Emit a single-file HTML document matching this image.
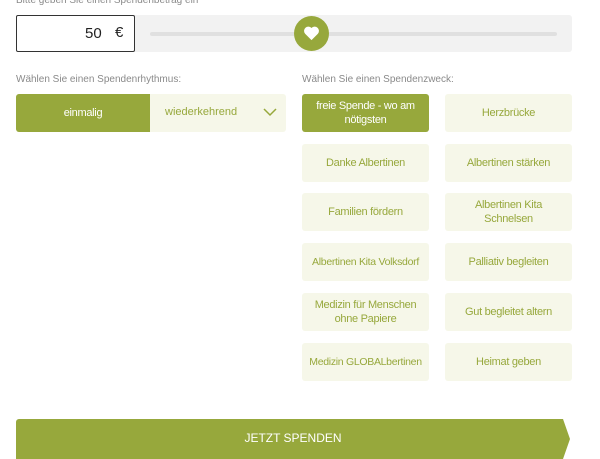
<!DOCTYPE html><html><head><style>
*{margin:0;padding:0;box-sizing:border-box}
body{width:600px;height:450px;overflow:hidden;background:#fff;font-family:"Liberation Sans",sans-serif;position:relative}
.a{position:absolute}
.lbl{font-size:10px;color:#8a8a8a}
.b{position:absolute;width:127px;height:38px;background:#f6f7e9;color:#97a83c;font-size:11px;letter-spacing:-0.3px;display:flex;align-items:center;justify-content:center;text-align:center;border-radius:3px;line-height:14px;padding:0 2px}
.n{white-space:nowrap}
.g{background:#97a83c;color:#fff}
</style></head><body>
<div class="a lbl" style="left:16px;top:-5px">Bitte geben Sie einen Spendenbetrag ein</div>
<div class="a" style="left:134px;top:15px;width:438px;height:37px;background:#f2f2f2;border-radius:0 3px 3px 0"></div>
<div class="a" style="left:150px;top:32px;width:407px;height:4px;background:#e0e0e0;border-radius:2px"></div>
<div class="a" style="left:16px;top:15px;width:119px;height:37px;border:1px solid #333;background:#fff;border-radius:2px;font-size:15px;color:#222"><span class="a" style="left:68px;top:9px">50</span><span class="a" style="left:98px;top:8px">€</span></div>
<div class="a" style="left:294px;top:16px;width:35px;height:35px;border-radius:50%;background:#97a83c"></div>
<svg class="a" style="left:303px;top:25px" width="17" height="16" viewBox="0 0 24 22"><path d="M12 21 L3 12 A5.5 5.5 0 0 1 12 4 A5.5 5.5 0 0 1 21 12 Z" fill="#fff"/></svg>
<div class="a lbl" style="left:16px;top:74px">Wählen Sie einen Spendenrhythmus:</div>
<div class="a lbl" style="left:302px;top:74px">Wählen Sie einen Spendenzweck:</div>
<div class="a" style="left:16px;top:94px;width:270px;height:38px;background:#f6f7e9;border-radius:3px"></div>
<div class="b g" style="left:16px;top:94px;width:134px;border-radius:3px 0 0 3px">einmalig</div>
<div class="a" style="left:165px;top:106px;font-size:11px;color:#97a83c">wiederkehrend</div>
<svg class="a" style="left:263px;top:107px" width="14" height="10" viewBox="0 0 14 10"><path d="M1 2 L7 8 L13 2" stroke="#97a83c" stroke-width="1.5" fill="none"/></svg>
<div class="b g" style="left:302px;top:94px">freie Spende - wo am nötigsten</div>
<div class="b" style="left:445px;top:94px">Herzbrücke</div>
<div class="b" style="left:302px;top:144px">Danke Albertinen</div>
<div class="b" style="left:445px;top:144px">Albertinen stärken</div>
<div class="b" style="left:302px;top:193px">Familien fördern</div>
<div class="b" style="left:445px;top:193px;padding:0 20px">Albertinen Kita Schnelsen</div>
<div class="b n" style="left:302px;top:243px;font-size:10.5px">Albertinen Kita Volksdorf</div>
<div class="b" style="left:445px;top:243px">Palliativ begleiten</div>
<div class="b" style="left:302px;top:293px">Medizin für Menschen ohne Papiere</div>
<div class="b" style="left:445px;top:293px">Gut begleitet altern</div>
<div class="b n" style="left:302px;top:343px;font-size:10.5px">Medizin GLOBALbertinen</div>
<div class="b" style="left:445px;top:343px">Heimat geben</div>
<div class="a" style="left:16px;top:419px;width:554px;height:40px;background:#97a83c;clip-path:polygon(0 0,547px 0,554px 20px,547px 40px,0 40px);border-radius:3px 0 0 0"></div>
<div class="a" style="left:16px;top:431px;width:554px;text-align:center;color:#fff;font-size:12px">JETZT SPENDEN</div>
</body></html>
